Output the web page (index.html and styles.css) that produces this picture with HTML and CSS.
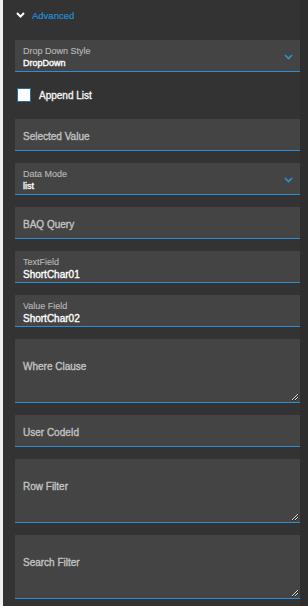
FILE: index.html
```html
<!DOCTYPE html>
<html lang="en">
<head>
    <meta charset="UTF-8">
    <meta name="viewport" content="width=device-width, initial-scale=1.0">
    <title>Advanced</title>
    <link rel="stylesheet" href="styles.css">
</head>
<body>
    <div class="panel">
        <div class="content">
            <div class="section-head">
                <svg class="chev-white" width="9" height="6" viewBox="0 0 9 6"><path d="M1 1 L4.5 4.5 L8 1" fill="none" stroke="#fff" stroke-width="2"/></svg>
                <span>Advanced</span>
            </div>

            <div class="field select">
                <div class="lbl">Drop Down Style</div>
                <div class="val">DropDown</div>
                <svg class="chev-blue" width="9" height="6" viewBox="0 0 9 6"><path d="M1 1 L4.5 4.5 L8 1" fill="none" stroke="#2b93d6" stroke-width="1.6"/></svg>
            </div>

            <label class="check-row">
                <span class="box"></span>
                <span>Append List</span>
            </label>

            <div class="field"><span class="ph">Selected Value</span></div>

            <div class="field select">
                <div class="lbl">Data Mode</div>
                <div class="val">list</div>
                <svg class="chev-blue" width="9" height="6" viewBox="0 0 9 6"><path d="M1 1 L4.5 4.5 L8 1" fill="none" stroke="#2b93d6" stroke-width="1.6"/></svg>
            </div>

            <div class="field"><span class="ph">BAQ Query</span></div>

            <div class="field filled">
                <div class="lbl">TextField</div>
                <div class="val big">ShortChar01</div>
            </div>

            <div class="field filled">
                <div class="lbl">Value Field</div>
                <div class="val big">ShortChar02</div>
            </div>

            <div class="field area">
                <span class="ph">Where Clause</span>
                <svg class="grip" width="9" height="9" viewBox="0 0 9 9"><path d="M8 2 L2 8 M8 5 L5 8" stroke="#ddd" stroke-width="1"/><path d="M9 2 L2 9 M9 5 L5 9" stroke="#222" stroke-width="0.8"/></svg>
            </div>

            <div class="field"><span class="ph">User CodeId</span></div>

            <div class="field area">
                <span class="ph">Row Filter</span>
                <svg class="grip" width="9" height="9" viewBox="0 0 9 9"><path d="M8 2 L2 8 M8 5 L5 8" stroke="#ddd" stroke-width="1"/><path d="M9 2 L2 9 M9 5 L5 9" stroke="#222" stroke-width="0.8"/></svg>
            </div>

            <div class="field area">
                <span class="ph">Search Filter</span>
                <svg class="grip" width="9" height="9" viewBox="0 0 9 9"><path d="M8 2 L2 8 M8 5 L5 8" stroke="#ddd" stroke-width="1"/><path d="M9 2 L2 9 M9 5 L5 9" stroke="#222" stroke-width="0.8"/></svg>
            </div>
        </div>
        <div class="track"></div>
    </div>
</body>
</html>
```

FILE: styles.css
```css
body {
    margin: 0;
    padding: 0;
    background-color: #f0f0f0;
    font-family: "Liberation Sans", Arial, sans-serif;
}

.panel {
    margin-left: 3px;
    height: 606px;
    display: flex;
    background-color: #333333;
    overflow: hidden;
}

.content {
    flex: 1;
    padding-left: 12px;
}

.track {
    width: 8px;
    background-color: #2e2e2e;
}

.section-head {
    height: 31px;
    display: flex;
    align-items: center;
    padding-left: 1px;
    padding-bottom: 1px;
    box-sizing: border-box;
    color: #1f8fd8;
    font-size: 9.5px;
    -webkit-text-stroke: 0.2px #1f8fd8;
}

.chev-white {
    margin-right: 7px;
}

.field {
    position: relative;
    height: 32px;
    box-sizing: border-box;
    background-color: #444444;
    border-bottom: 1px solid #2b8fd2;
    padding: 12px 8px 0;
    margin-top: 12px;
}

.section-head + .field {
    margin-top: 9px;
}

.ph {
    display: block;
    font-size: 10px;
    line-height: 12px;
    color: #c2c2c2;
    -webkit-text-stroke: 0.35px #c2c2c2;
}

.select, .filled {
    padding-top: 5px;
}

.lbl {
    font-size: 9px;
    line-height: 12px;
    color: #b5b5b5;
    -webkit-text-stroke: 0.15px #b5b5b5;
}

.val {
    font-size: 9px;
    line-height: 12px;
    color: #ffffff;
    -webkit-text-stroke: 0.35px #ffffff;
}

.filled .lbl {
    line-height: 13px;
}

.val.big {
    font-size: 10px;
}

.chev-blue {
    position: absolute;
    right: 7px;
    top: 14px;
}

.check-row {
    height: 14px;
    margin-top: 16px;
    display: flex;
    align-items: center;
    padding-left: 2px;
    font-size: 10px;
    color: #f2f2f2;
    -webkit-text-stroke: 0.35px #f2f2f2;
}

.box {
    width: 12px;
    height: 12px;
    background-color: #ffffff;
    border: 1px solid #2a6c9e;
    margin-right: 8px;
}

.check-row + .field {
    margin-top: 17px;
}

.area {
    height: 64px;
    padding-top: 22px;
}

.grip {
    position: absolute;
    right: 1px;
    bottom: 1px;
}
```
